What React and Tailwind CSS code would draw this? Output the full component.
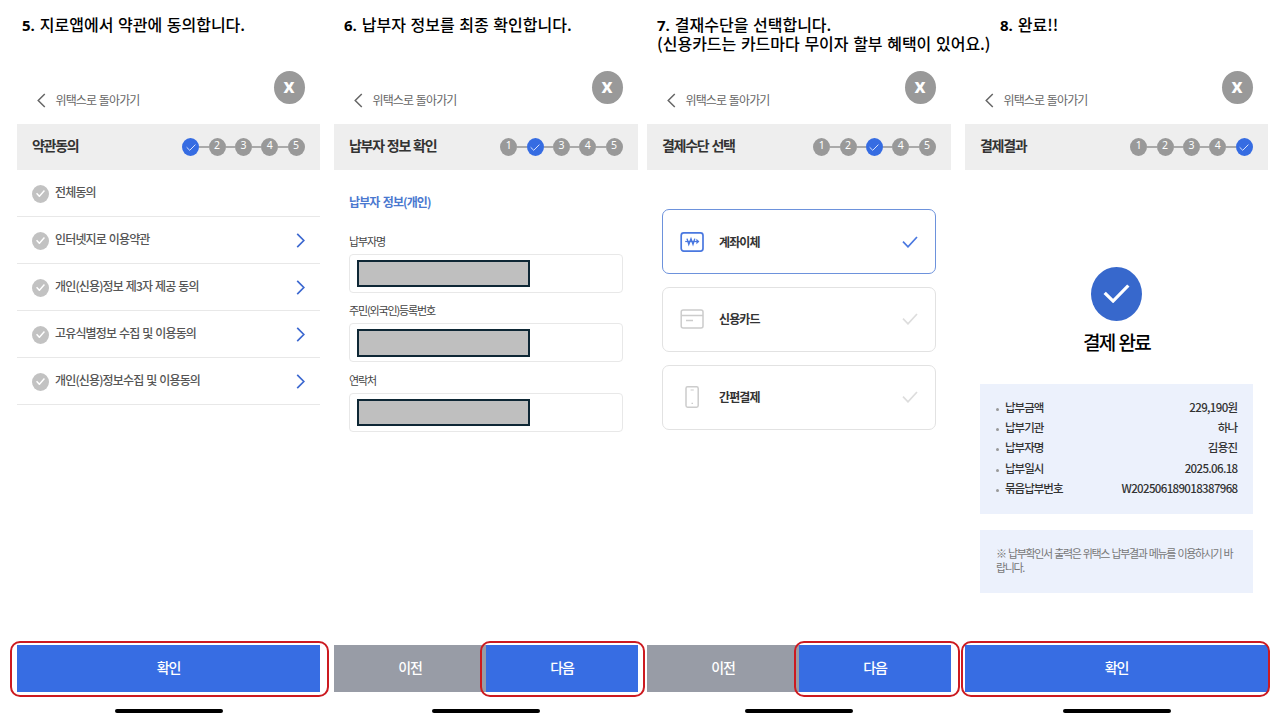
import React from 'react';

const terms = [
  { label: '전체동의', link: false },
  { label: '인터넷지로 이용약관', link: true },
  { label: '개인(신용)정보 제3자 제공 동의', link: true },
  { label: '고유식별정보 수집 및 이용동의', link: true },
  { label: '개인(신용)정보수집 및 이용동의', link: true },
];

const fields = ['납부자명', '주민(외국인)등록번호', '연락처'];

const result = [
  ['납부금액', '229,190원'],
  ['납부기관', '하나'],
  ['납부자명', '김용진'],
  ['납부일시', '2025.06.18'],
  ['묶음납부번호', 'W202506189018387968'],
];

const Check = ({ className, width = 1.4 }) => (
  <svg viewBox="0 0 16 12" preserveAspectRatio="none" fill="none" stroke="currentColor" strokeWidth={width} className={className}>
    <path d="M1 5.6 L6 10.8 L15 1" />
  </svg>
);

const Chevron = ({ className, left, width = 1.5 }) => (
  <svg viewBox="0 0 9 16" fill="none" stroke="currentColor" strokeWidth={width} className={className}>
    <path d={left ? 'M8 1 L1 8 L8 15' : 'M1 1 L8 8 L1 15'} />
  </svg>
);

const Steps = ({ current }) => (
  <div className="flex items-center">
    {[1, 2, 3, 4, 5].map((n) => (
      <React.Fragment key={n}>
        {n > 1 && <span className="h-[2px] w-[9.3px] bg-[#aaaaaa]" />}
        {n === current ? (
          <span className="flex h-[18px] w-[17px] items-center justify-center rounded-[50%] bg-[#366ce2] text-[#dfe8ff]">
            <Check className="mt-px h-[7px] w-[10px]" width={1.6} />
          </span>
        ) : (
          <span className='flex h-[18px] w-[17px] justify-center rounded-[50%] bg-[#999999] font-["Noto_Sans",sans-serif] text-[10.5px] leading-[15px] text-white'>
            {n}
          </span>
        )}
      </React.Fragment>
    ))}
  </div>
);

const Screen = ({ className, title, step, children, footer }) => (
  <section className={`flex h-full shrink-0 flex-col ${className}`}>
    <div className="flex h-[60px] shrink-0 items-start justify-between pl-[19.5px] pr-[15px]">
      <div className="flex items-center gap-[10px] pt-[27px] text-[#666666]">
        <Chevron left className="mt-px h-[15px] w-[9px]" width={1.6} />
        <span className="text-[12px] leading-[18px] tracking-[-0.9px] [word-spacing:1px]">위택스로 돌아가기</span>
      </div>
      <span className='mt-[7px] flex h-[33px] w-[31px] items-center justify-center rounded-[50%] bg-[#999999] font-["Open_Sans",sans-serif] text-[19px] font-bold leading-none text-white'>
        <span className="-mt-[2px] mr-px">x</span>
      </span>
    </div>
    <div className="flex h-[46.4px] shrink-0 items-center justify-between bg-[#eeeeee] pl-[15px] pr-[15.5px]">
      <h2 className="-mt-[3px] text-[14px] font-bold tracking-[-1.3px] text-[#333333] [word-spacing:1.2px]">{title}</h2>
      <Steps current={step} />
    </div>
    <div className="flex-1">{children}</div>
    <div className="relative flex h-[47px] shrink-0 text-[14px] font-medium text-white">{footer}</div>
    <div className="flex h-7 shrink-0 items-start justify-center pt-[17px]">
      <span className="h-1 w-[108px] rounded-full bg-black" />
    </div>
  </section>
);

const Button = ({ gray, children }) => (
  <button className={`flex-1 pb-[3px] tracking-[-1.2px] ${gray ? 'bg-[#989ca6]' : 'bg-[#376de3]'}`}>{children}</button>
);

const Marker = ({ className }) => (
  <span className={`pointer-events-none absolute -top-[4px] z-10 h-[56px] rounded-[10px] border-2 border-[#cc1a20] ${className}`} />
);

const BankIcon = () => (
  <svg viewBox="0 0 24 20" fill="none" stroke="#4a78e0" className="h-5 w-6">
    <rect x="1.2" y="0.9" width="21.8" height="18.2" rx="2.5" strokeWidth="1.7" />
    <path d="M7 6.6 L8.8 12.4 L11 6.8 L13 12.4 L14.8 6.6" strokeWidth="1.4" />
    <path d="M5.2 9.5 H17" strokeWidth="1.2" />
    <path d="M16.4 6.8 L19.4 9.5 L16.4 12.2 Z" fill="#4a78e0" stroke="none" />
  </svg>
);

const CardIcon = () => (
  <svg viewBox="0 0 24 20" fill="none" stroke="#cccccc" strokeWidth="1.5" className="h-5 w-6">
    <rect x="1.2" y="1" width="21.8" height="18" rx="2" />
    <path d="M1 6.5 H23 M6 11.5 H13" />
  </svg>
);

const PhoneIcon = () => (
  <svg viewBox="0 0 24 22" fill="none" stroke="#cccccc" strokeWidth="1.5" className="h-[22px] w-6">
    <rect x="6" y="0.8" width="12.2" height="20.4" rx="1.6" />
    <path d="M10.6 4 H13.8 M11.5 17.3 H13" strokeWidth="1.2" />
  </svg>
);

const methods = [
  { label: '계좌이체', icon: <BankIcon />, active: true },
  { label: '신용카드', icon: <CardIcon /> },
  { label: '간편결제', icon: <PhoneIcon /> },
];

const Heading = ({ className, no, children }) => (
  <h1 className={`shrink-0 whitespace-nowrap text-[16px] font-medium leading-[18px] text-black [word-spacing:1px] ${className || ''}`}>
    <span className='font-["Open_Sans",sans-serif] text-[15px] font-bold'>{no}. </span>
    {children}
  </h1>
);

const App = () => {
  return (
    <main className='flex h-[720px] w-[1280px] flex-col overflow-hidden bg-white font-["Noto_Sans_CJK_KR",sans-serif]'>
      <header className="flex h-16 shrink-0 pl-[22px] pt-[15px]">
        <Heading no="5" className="w-[322px]">지로앱에서 약관에 동의합니다.</Heading>
        <Heading no="6" className="w-[313px]">납부자 정보를 최종 확인합니다.</Heading>
        <Heading no="7" className="w-[343px]">
          결재수단을 선택합니다.
          <br />
          (신용카드는 카드마다 무이자 할부 혜택이 있어요.)
        </Heading>
        <Heading no="8">완료!!</Heading>
      </header>

      <div className="flex h-[656px] pl-[17px]">
        <Screen
          className="w-[303px]"
          title="약관동의"
          step={1}
          footer={
            <>
              <Button>확인</Button>
              <Marker className="-left-[7px] w-[319px]" />
            </>
          }
        >
          <ul>
            {terms.map((t) => (
              <li key={t.label} className="flex h-[47px] items-center border-b-[1.5px] border-[#e8e8e8] pl-[15px] pr-[15px]">
                <span className="mt-[0.5px] flex h-[18px] w-[17px] items-center justify-center rounded-[50%] bg-[#c2c2c2] text-white">
                  <Check width={2.6} className="h-[7px] w-[9px]" />
                </span>
                <span className="-mt-[3px] ml-[6px] flex-1 text-[12px] font-medium tracking-[-0.85px] text-[#555555] [word-spacing:1px]">{t.label}</span>
                {t.link && <Chevron className="h-[15px] w-[9px] text-[#3c68d0]" width={1.8} />}
              </li>
            ))}
          </ul>
        </Screen>

        <Screen
          className="ml-[14px] w-[304px]"
          title="납부자 정보 확인"
          step={2}
          footer={
            <>
              <Button gray>이전</Button>
              <Button>다음</Button>
              <Marker className="-right-[7px] w-[165px]" />
            </>
          }
        >
          <div className="pl-[15px] pr-[15px] pt-[22.6px]">
            <h3 className="text-[12px] font-bold leading-[18px] tracking-[-0.9px] text-[#4a78cf] [word-spacing:1.5px]">납부자 정보(개인)</h3>
            <div className="mt-[22px] flex flex-col gap-[14.4px]">
              {fields.map((f) => (
                <label key={f} className="flex h-[55px] flex-col text-[11px] leading-4 tracking-[-1.15px] text-[#444444]">
                  {f}
                  <span className="mt-[5px] flex h-[39px] shrink-0 rounded-[4px] border-[1.5px] border-[#e8e8e8] pl-[7px] pt-[5px]">
                    <span className="h-[27.5px] w-[173px] border-2 border-[#0e2735] bg-[#bfbfbf]" />
                  </span>
                </label>
              ))}
            </div>
          </div>
        </Screen>

        <Screen
          className="ml-[9px] w-[304px]"
          title="결제수단 선택"
          step={3}
          footer={
            <>
              <Button gray>이전</Button>
              <Button>다음</Button>
              <Marker className="-right-[9px] w-[166px]" />
            </>
          }
        >
          <div className="flex flex-col gap-[12.7px] px-[15px] pt-[38.8px]">
            {methods.map((m) => (
              <div
                key={m.label}
                className={`flex h-[65px] items-center rounded-[7px] border pl-[17px] pr-[17px] ${m.active ? 'border-[#6d92dc]' : 'border-[#e2e2e2]'}`}
              >
                {m.icon}
                <span className="ml-[15px] flex-1 text-[12px] font-bold tracking-[-0.9px] text-[#333333]">{m.label}</span>
                <Check className={`h-[12px] w-[16px] ${m.active ? 'text-[#4a78e0]' : 'text-[#dddddd]'}`} width={1.7} />
              </div>
            ))}
          </div>
        </Screen>

        <Screen
          className="ml-[14px] w-[303px]"
          title="결제결과"
          step={5}
          footer={
            <>
              <Button>확인</Button>
              <Marker className="-left-[4px] w-[309px]" />
            </>
          }
        >
          <div className="flex flex-col items-center px-[15px] pt-[96.6px]">
            <span className="flex h-[54px] w-[51px] items-center justify-center rounded-[50%] bg-[#3768cc] text-white">
              <Check className="h-[19px] w-[27px]" width={1.9} />
            </span>
            <p className="mt-[7px] text-[19px] font-medium leading-7 tracking-[-1.7px] text-black [word-spacing:1.5px]">결제 완료</p>
            <dl className="mt-[28px] flex h-[130px] w-full flex-col bg-[#ecf1fc] px-[15px] pt-[14px]">
              {result.map(([k, v]) => (
                <div key={k} className="flex h-[20.2px] items-center text-[11.5px] font-medium tracking-[-1px] text-[#333333]">
                  <span className="mr-[6px] mt-[3px] ml-px size-[3px] rounded-full bg-[#999999]" />
                  <dt className="-mt-px flex-1">{k}</dt>
                  <dd className="-mt-px mr-[0.5px] tracking-[-0.65px]">{v}</dd>
                </div>
              ))}
            </dl>
            <p className="mt-[16px] h-[63px] w-full whitespace-nowrap bg-[#ecf1fc] pl-[16px] pt-[16px] text-[11px] leading-[14px] tracking-[-1.35px] text-[#777777] [word-spacing:1.2px]">
              ※ 납부확인서 출력은 위택스 납부결과 메뉴를 이용하시기 바
              <br />
              랍니다.
            </p>
          </div>
        </Screen>
      </div>
    </main>
  );
};

export default App;
